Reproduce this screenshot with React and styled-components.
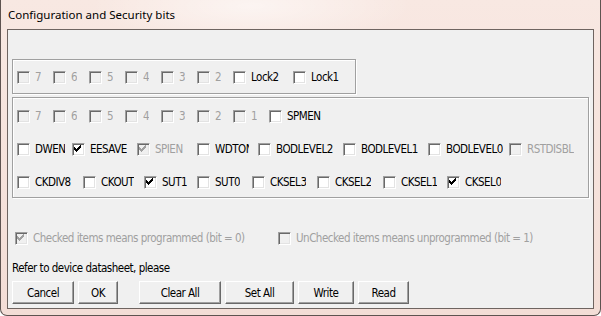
import styled, { createGlobalStyle } from 'styled-components'

const GlobalStyle = createGlobalStyle`
  html, body {
    margin: 0;
    padding: 0;
    width: 601px;
    height: 316px;
    overflow: hidden;
    background: #fff;
  }
`

const lockBits = [
  { name: '7', w: 36, disabled: true },
  { name: '6', w: 36, disabled: true },
  { name: '5', w: 36, disabled: true },
  { name: '4', w: 36, disabled: true },
  { name: '3', w: 36, disabled: true },
  { name: '2', w: 36, disabled: true },
  { name: 'Lock2', w: 60 },
  { name: 'Lock1' },
]

const fuseRows = [
  [
    { name: '7', w: 36, disabled: true },
    { name: '6', w: 36, disabled: true },
    { name: '5', w: 36, disabled: true },
    { name: '4', w: 36, disabled: true },
    { name: '3', w: 36, disabled: true },
    { name: '2', w: 36, disabled: true },
    { name: '1', w: 36, disabled: true },
    { name: 'SPMEN' },
  ],
  [
    { name: 'DWEN', w: 55 },
    { name: 'EESAVE', w: 65, checked: true },
    { name: 'SPIEN', w: 60, checked: true, disabled: true },
    { name: 'WDTON', w: 61, lw: 34 },
    { name: 'BODLEVEL2', w: 85 },
    { name: 'BODLEVEL1', w: 85 },
    { name: 'BODLEVEL0', w: 81 },
    { name: 'RSTDISBL', disabled: true },
  ],
  [
    { name: 'CKDIV8', w: 66 },
    { name: 'CKOUT', w: 61 },
    { name: 'SUT1', w: 53, checked: true },
    { name: 'SUT0', w: 55 },
    { name: 'CKSEL3', w: 65 },
    { name: 'CKSEL2', w: 66 },
    { name: 'CKSEL1', w: 64 },
    { name: 'CKSEL0', checked: true },
  ],
]

const buttons = [
  { label: 'Cancel', w: 62 },
  { label: 'OK', w: 40 },
  { label: 'Clear All', w: 82, gap: 21 },
  { label: 'Set All', w: 69 },
  { label: 'Write', w: 56 },
  { label: 'Read', w: 51 },
]

// classic 3px-tall columns of the Windows check mark
const checkCols = [2, 3, 4, 3, 2, 1, 0]

const CheckMark = ({ color }) => (
  <svg width="13" height="13" viewBox="0 0 13 13" shapeRendering="crispEdges">
    {checkCols.map((y, i) => (
      <rect key={i} x={1 + i} y={1 + y} width="1" height="3" fill={color} />
    ))}
  </svg>
)

const CheckBox = ({ name, w, lw, checked, disabled }) => (
  <Item $w={w} $disabled={disabled}>
    <Box $disabled={disabled}>
      {checked && <CheckMark color={disabled ? '#a0a0a0' : '#000'} />}
    </Box>
    <Label $lw={lw}>{name}</Label>
  </Item>
)

export default function App() {
  return (
    <>
      <GlobalStyle />
      <Window>
        <TitleBar>Configuration and Security bits</TitleBar>
        <Client>
          <LockGroup>
            <Row>
              {lockBits.map((b) => (
                <CheckBox key={b.name} {...b} />
              ))}
            </Row>
          </LockGroup>

          <FuseGroup>
            {fuseRows.map((row, i) => (
              <Row key={i}>
                {row.map((b) => (
                  <CheckBox key={b.name} {...b} />
                ))}
              </Row>
            ))}
          </FuseGroup>

          <InfoRow>
            <CheckBox name="Checked items means programmed (bit = 0)" w={263} checked disabled />
            <CheckBox name="UnChecked items means unprogrammed (bit = 1)" disabled />
          </InfoRow>

          <Note>Refer to device datasheet, please</Note>

          <ButtonRow>
            {buttons.map((b) => (
              <Button key={b.label} $w={b.w} $gap={b.gap}>
                {b.label}
              </Button>
            ))}
          </ButtonRow>
        </Client>
      </Window>
    </>
  )
}

const uiFont = `"DejaVu Sans Condensed", "Liberation Sans", sans-serif`

const Window = styled.div`
  box-sizing: border-box;
  width: 601px;
  height: 316px;
  display: flex;
  flex-direction: column;
  padding: 0 6px 6px 6px;
  border: 1px solid #5e5350;
  border-top: none;
  border-radius: 0 0 7px 7px;
  background:
    radial-gradient(ellipse 160px 40px at 250px 6px, rgba(255, 255, 255, 0.55), rgba(255, 255, 255, 0)),
    linear-gradient(#f8e8e2, #f3ddd6);
`

const TitleBar = styled.div`
  height: 29px;
  display: flex;
  align-items: center;
  padding: 0 0 0 1px;
  font-family: "Noto Sans", "Open Sans", sans-serif;
  font-size: 11.5px;
  color: #000;
`

const Client = styled.div`
  flex: 1;
  display: flex;
  flex-direction: column;
  border: 1px solid #6e6460;
  background: #f0f0f0;
  font-family: ${uiFont};
  font-size: 11.5px;
  letter-spacing: -0.5px;
  color: #000;
`

const Etched = styled.div`
  box-sizing: border-box;
  margin-left: 4px;
  border: 1px solid #a0a0a0;
  box-shadow: inset 1px 1px 0 #fff, 1px 1px 0 #fff;
  padding-left: 4px;
`

const LockGroup = styled(Etched)`
  margin-top: 29px;
  width: 344px;
  height: 35px;
  padding-top: 7px;
`

const FuseGroup = styled(Etched)`
  margin-top: 3px;
  width: 577px;
  height: 101px;
  padding-top: 8px;
  display: flex;
  flex-direction: column;
  gap: 13px;
`

const Row = styled.div`
  height: 20px;
  display: flex;
  align-items: center;
`

const Item = styled.label`
  flex: ${(p) => (p.$w ? 'none' : '1')};
  width: ${(p) => (p.$w ? `${p.$w}px` : 'auto')};
  display: flex;
  align-items: center;
  gap: 5px;
  overflow: hidden;
  white-space: nowrap;
  color: ${(p) => (p.$disabled ? '#a0a0a0' : '#000')};
`

const Label = styled.span`
  flex: none;
  overflow: hidden;
  max-width: ${(p) => (p.$lw ? `${p.$lw}px` : 'none')};
`

const Box = styled.span`
  flex: none;
  box-sizing: border-box;
  width: 13px;
  height: 13px;
  position: relative;
  border-top: 1px solid #a0a0a0;
  border-left: 1px solid #a0a0a0;
  border-right: 1px solid #fff;
  border-bottom: 1px solid #fff;
  box-shadow: inset 1px 1px 0 #696969, inset -1px -1px 0 #e3e3e3;
  background: ${(p) => (p.$disabled ? '#f0f0f0' : '#fff')};

  svg {
    position: absolute;
    left: 0;
    top: 0;
  }
`

const InfoRow = styled(Row)`
  margin-top: 30px;
  padding-left: 7px;
`

const Note = styled.div`
  margin-top: 12px;
  padding-left: 4px;
  height: 16px;
  line-height: 16px;
`

const ButtonRow = styled.div`
  margin-top: 5px;
  padding-left: 4px;
  display: flex;
  gap: 4px;
`

const Button = styled.button`
  box-sizing: border-box;
  width: ${(p) => p.$w}px;
  height: 23px;
  margin-left: ${(p) => (p.$gap ? p.$gap - 4 : 0)}px;
  padding: 0;
  font-family: ${uiFont};
  font-size: 11.5px;
  letter-spacing: -0.5px;
  color: #000;
  background: #f0f0f0;
  border-top: 1px solid #fff;
  border-left: 1px solid #fff;
  border-right: 1px solid #696969;
  border-bottom: 1px solid #696969;
  box-shadow: inset -1px -1px 0 #a0a0a0;
  border-radius: 0;
`
